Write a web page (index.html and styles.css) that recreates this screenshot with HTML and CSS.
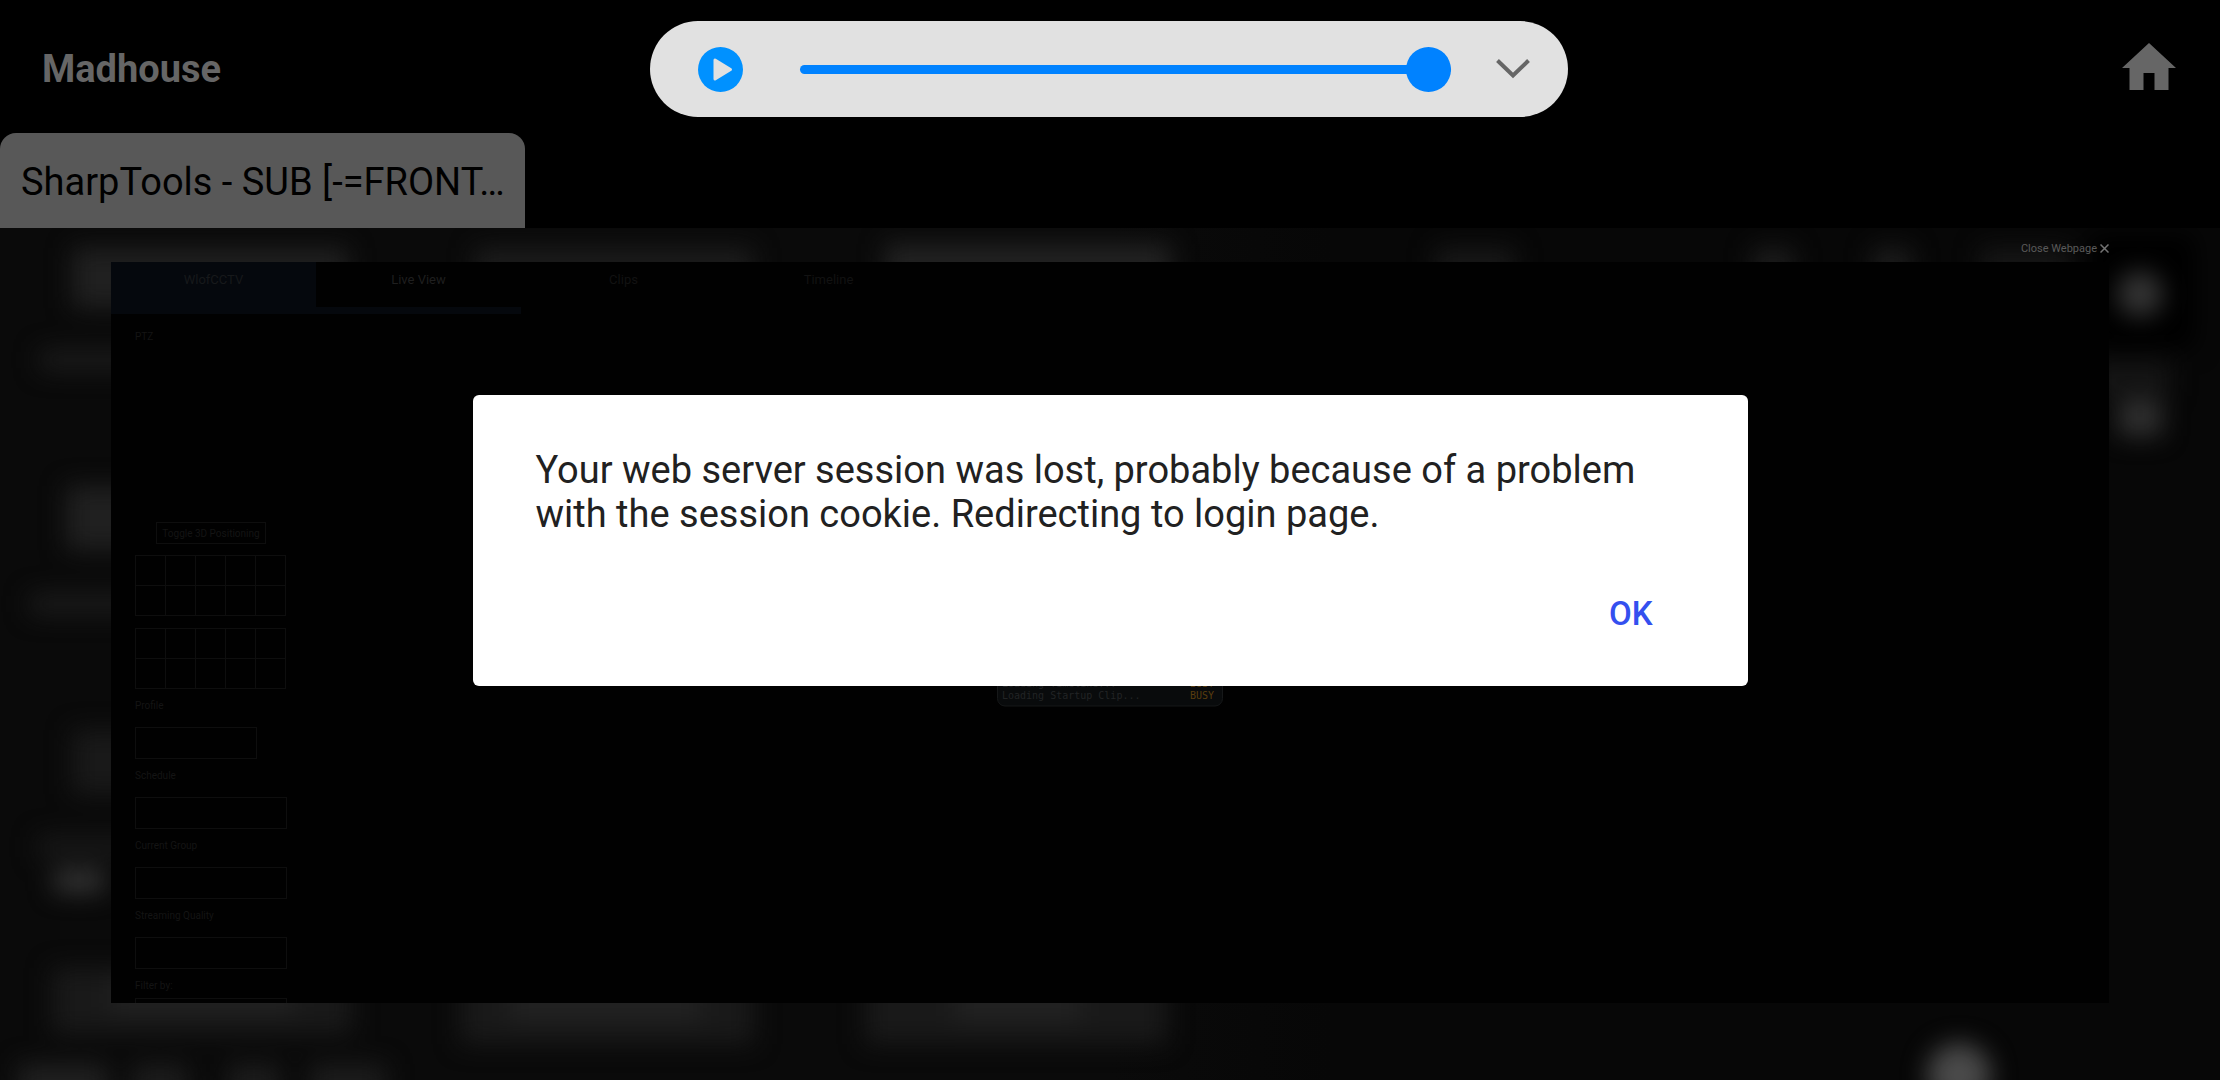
FILE: index.html
```
<!DOCTYPE html>
<html lang="en">
<head>
    <meta charset="UTF-8">
    <meta name="viewport" content="width=device-width, initial-scale=1">
    <title>Madhouse</title>
    <link rel="stylesheet" href="styles.css">
</head>
<body>
    <header class="topbar">
        <h1 class="title">Madhouse</h1>
        <div class="player">
            <button class="play-btn" aria-label="Play">
                <svg width="45" height="45" viewBox="0 0 45 45">
                    <circle cx="22.5" cy="22.5" r="22.5" fill="#0091ff"/>
                    <path d="M17 13v19l15.500-9.500z" fill="#e1e1e1" stroke="#e1e1e1" stroke-width="3" stroke-linejoin="round"/>
                </svg>
            </button>
            <input type="range" class="seek" min="0" max="100" value="100" aria-label="Position">
            <button class="expand-btn" aria-label="Expand">
                <svg width="34" height="20" viewBox="0 0 34 20">
                    <path d="M1.500 1.500L17 16.500L32.500 1.500" fill="none" stroke="#666" stroke-width="4"/>
                </svg>
            </button>
        </div>
        <a class="home" href="#" aria-label="Home">
            <svg width="54" height="47" viewBox="0 0 54 47">
                <path d="M27 0L54 25H46.500V47H32.500V30H21.500V47H7.500V25H0z" fill="#666"/>
            </svg>
        </a>
    </header>

    <nav class="browser-tabs">
        <a class="browser-tab" href="#">SharpTools - SUB [-=FRONT…</a>
    </nav>

    <main class="dashboard">
        <!-- blurred tiles behind the open webpage -->
        <svg class="backdrop" viewBox="0 0 2220 852" preserveAspectRatio="none" aria-hidden="true">
            <defs>
                <linearGradient id="base">
                    <stop offset="0.5" stop-color="#0a0a0a"/>
                    <stop offset="0.6" stop-color="#070707"/>
                </linearGradient>
                <filter id="soft" x="-10%" y="-10%" width="120%" height="120%" color-interpolation-filters="sRGB">
                    <feGaussianBlur stdDeviation="12"/>
                </filter>
            </defs>
            <rect width="2220" height="852" fill="url(#base)"/>
            <g fill="#1c1c1c" filter="url(#soft)">
                <rect x="72" y="20" width="276" height="60" fill="#202020"/>
                <rect x="475" y="20" width="278" height="60"/>
                <rect x="885" y="16" width="286" height="60" fill="#222"/>
                <rect x="1435" y="20" width="80" height="40" fill="#181818"/>
                <rect x="1752" y="20" width="42" height="40"/>
                <rect x="1872" y="20" width="40" height="40"/>
                <rect x="1980" y="20" width="90" height="40" fill="#161616"/>
                <rect x="40" y="122" width="150" height="20"/>
                <rect x="66" y="258" width="240" height="64" fill="#202020"/>
                <rect x="30" y="366" width="150" height="20"/>
                <rect x="72" y="502" width="260" height="64" fill="#191919"/>
                <rect x="38" y="608" width="150" height="22" fill="#181818"/>
                <rect x="54" y="642" width="50" height="22" fill="#363636"/>
                <rect x="52" y="740" width="300" height="66" fill="#191919"/>
                <rect x="460" y="740" width="294" height="76" fill="#191919"/>
                <rect x="865" y="740" width="302" height="76" fill="#191919"/>
                <rect x="110" y="750" width="185" height="34" fill="#222"/>
                <rect x="510" y="750" width="190" height="42" fill="#222"/>
                <rect x="955" y="750" width="125" height="42" fill="#222"/>
                <rect x="18" y="836" width="90" height="40" fill="#202020"/>
                <rect x="132" y="836" width="56" height="40"/>
                <rect x="228" y="836" width="52" height="40"/>
                <rect x="310" y="836" width="76" height="40"/>
                <rect x="2090" y="6" width="105" height="114" fill="#000"/>
                <rect x="2090" y="134" width="80" height="34" fill="#151515"/>
                <circle cx="2140" cy="66" r="23" fill="#343434"/>
                <rect x="2118" y="172" width="44" height="36" fill="#303030"/>
                <circle cx="1959" cy="847" r="32" fill="#4a4a4a"/>
            </g>
        </svg>

        <div class="popup">
            <button class="close-btn">
                Close Webpage
                <svg width="9" height="9" viewBox="0 0 9 9">
                    <path d="M0.500 0.500L8.500 8.500M8.500 0.500L0.500 8.500" stroke="#747474" stroke-width="1.500"/>
                </svg>
            </button>

            <section class="webpage">
                <nav class="site-nav">
                    <a class="site-link brand" href="#">WlofCCTV</a>
                    <a class="site-link active" href="#">Live View</a>
                    <a class="site-link" href="#">Clips</a>
                    <a class="site-link" href="#">Timeline</a>
                </nav>

                <div class="sidebar">
                    <h2 class="label">PTZ</h2>
                    <div class="joystick"></div>
                    <button class="toggle-btn">Toggle 3D Positioning</button>
                    <div class="presets">
                        <button></button><button></button><button></button><button></button><button></button>
                        <button></button><button></button><button></button><button></button><button></button>
                    </div>
                    <div class="presets">
                        <button></button><button></button><button></button><button></button><button></button>
                        <button></button><button></button><button></button><button></button><button></button>
                    </div>
                    <div class="field field-short">
                        <label class="label" for="profile">Profile</label>
                        <input type="text" id="profile">
                    </div>
                    <div class="field">
                        <label class="label" for="schedule">Schedule</label>
                        <select id="schedule"></select>
                    </div>
                    <div class="field">
                        <label class="label" for="group">Current Group</label>
                        <select id="group"></select>
                    </div>
                    <div class="field">
                        <label class="label" for="quality">Streaming Quality</label>
                        <select id="quality"></select>
                    </div>
                    <div class="field field-filter">
                        <label class="label" for="filter">Filter by:</label>
                        <input type="text" id="filter">
                    </div>
                </div>

                <div class="loader">
                    <div class="loader-row"><span>Loading Timeline...</span><span class="busy">BUSY</span></div>
                    <div class="loader-row"><span>Loading Startup Clip...</span><span class="busy">BUSY</span></div>
                </div>
            </section>
        </div>
    </main>

    <div class="overlay">
        <div class="dialog" role="alertdialog" aria-describedby="message">
            <p id="message" class="message">Your web server session was lost, probably because of a problem with the session cookie. Redirecting to login page.</p>
            <button class="ok-btn">OK</button>
        </div>
    </div>
</body>
</html>
```

FILE: styles.css
```
* { box-sizing: border-box; }
body {
    font-family: Roboto, sans-serif;
    margin: 0;
    background: #000;
    display: flex;
    flex-direction: column;
    height: 100vh;
    overflow: hidden;
}
button {
    font-family: inherit;
    background: none;
    border: none;
    padding: 0;
    cursor: pointer;
}
svg { display: block; }
a { text-decoration: none; }

/* top bar */
.topbar {
    display: grid;
    grid-template-columns: 1fr minmax(0, 918px) 1fr;
    align-items: center;
    padding: 21px 44px 16px 42px;
}
.title {
    margin: 0;
    font-size: 38px;
    line-height: 44px;
    font-weight: bold;
    color: #666;
}
.player {
    display: flex;
    align-items: center;
    height: 96px;
    padding: 0 38px 0 48px;
    border-radius: 48px;
    background: #e1e1e1;
}
.seek {
    -webkit-appearance: none;
    appearance: none;
    flex: 1;
    min-width: 0;
    height: 45px;
    margin: 0 45px 0 57px;
    background: none;
}
.seek::-webkit-slider-runnable-track {
    height: 9px;
    border-radius: 5px;
    background: #0082ff;
}
.seek::-webkit-slider-thumb {
    -webkit-appearance: none;
    width: 45px;
    height: 45px;
    margin-top: -18px;
    border-radius: 50%;
    background: #0082ff;
}
.home {
    justify-self: end;
    padding-bottom: 6px;
}

/* browser tabs */
.browser-tabs {
    display: flex;
}
.browser-tab {
    width: 525px;
    padding: 27px 20px 24px 21px;
    border-radius: 16px 16px 0 0;
    background: #585858;
    color: #000;
    font-size: 38px;
    line-height: 44px;
    white-space: nowrap;
    overflow: hidden;
}

/* dashboard and the webpage opened over it */
.dashboard {
    position: relative;
    flex: 1;
    min-height: 0;
    display: flex;
    padding: 0 5% 77px;
}
.backdrop {
    position: absolute;
    inset: 0;
    width: 100%;
    height: 100%;
}
.popup {
    position: relative;
    flex: 1;
    display: flex;
    flex-direction: column;
}
.close-btn {
    display: flex;
    align-items: center;
    align-self: flex-end;
    gap: 3px;
    height: 34px;
    padding-top: 6px;
    font-size: 11px;
    color: #5a5a5a;
}
.webpage {
    position: relative;
    flex: 1;
    min-height: 0;
    overflow: hidden;
    background: #010101;
}
.site-nav {
    display: flex;
}
.site-link {
    width: 205px;
    height: 52px;
    padding-top: 10px;
    text-align: center;
    font-size: 13px;
    line-height: 16px;
    color: #121212;
}
.brand {
    background: #05080d;
    color: #17191b;
}
.active {
    border-bottom: 7px solid #05080d;
    color: #1f1f1f;
}
.sidebar {
    display: flex;
    flex-direction: column;
    width: 176px;
    padding: 16px 0 0 24px;
}
.label {
    display: block;
    margin: 0;
    font-size: 10px;
    line-height: 14px;
    font-weight: normal;
    color: #141414;
}
.joystick {
    height: 178px;
}
.toggle-btn {
    align-self: center;
    height: 22px;
    margin-bottom: 11px;
    padding: 0 5px;
    border: 1px solid #0e0e0e;
    font-size: 10px;
    color: #141414;
}
.presets {
    display: grid;
    grid-template-columns: repeat(5, 30px);
    grid-auto-rows: 30px;
    align-self: flex-start;
    border: solid #0e0e0e;
    border-width: 1px 0 0 1px;
}
.presets + .presets {
    margin-top: 12px;
}
.presets button {
    border: solid #0e0e0e;
    border-width: 0 1px 1px 0;
}
.field {
    padding-top: 10px;
}
.field input,
.field select {
    -webkit-appearance: none;
    appearance: none;
    display: block;
    width: 100%;
    height: 32px;
    margin: 14px 0 0;
    border: 1px solid #0e0e0e;
    border-radius: 0;
    background: none;
    color: #141414;
}
.field-short input {
    width: 80%;
}
.field-filter input {
    margin-top: 5px;
}

/* startup progress, floats in the middle of the webpage */
.loader {
    position: absolute;
    top: 50%;
    left: 50%;
    transform: translate(-50%, -50%);
    display: flex;
    flex-direction: column;
    justify-content: flex-end;
    width: 226px;
    height: 147px;
    padding: 4px 8px 4px 4px;
    border: 1px solid #161819;
    border-radius: 8px;
    background: #090b0c;
    font-family: "DejaVu Sans Mono", monospace;
    font-size: 10px;
    line-height: 12px;
    color: #222425;
}
.loader-row {
    display: flex;
    justify-content: space-between;
}
.busy {
    color: #5a3d0e;
}

/* alert */
.overlay {
    position: fixed;
    inset: 0;
    display: flex;
    justify-content: center;
    align-items: center;
}
.dialog {
    display: flex;
    flex-direction: column;
    width: 90%;
    max-width: 1275px;
    padding: 53px 63px 40px;
    border-radius: 6px;
    background: #fff;
}
.message {
    margin: 0;
    font-size: 38px;
    line-height: 44px;
    color: #212121;
}
.ok-btn {
    align-self: flex-end;
    margin-top: 45px;
    padding: 12px 32px;
    font-size: 33px;
    line-height: 41px;
    font-weight: 500;
    color: #3450ef;
}
```
